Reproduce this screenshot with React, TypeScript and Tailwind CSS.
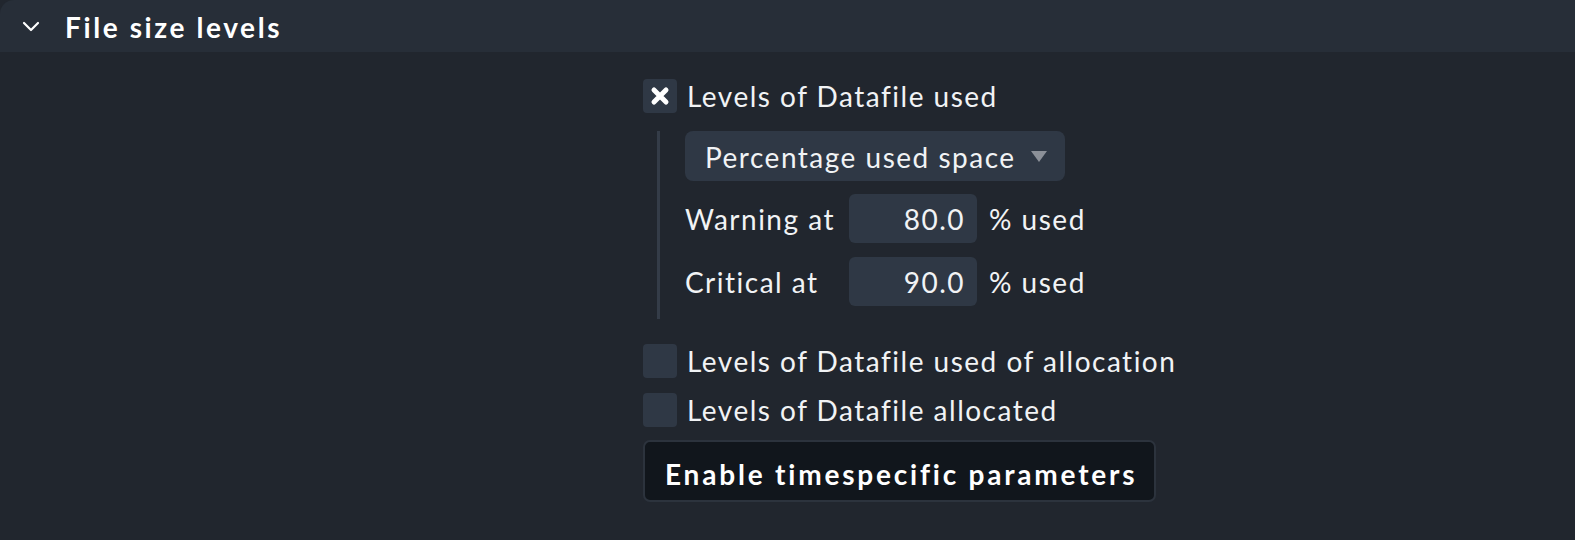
import React from "react";

const font = { fontFamily: "Lato, 'Noto Sans', sans-serif" };

const Checkbox = ({ checked }: { checked?: boolean }) => (
  <span className="flex h-[34px] w-[34px] shrink-0 items-center justify-center rounded-[4px] bg-[#2f3845]">
    {checked && (
      <svg width="22" height="22" viewBox="0 0 22 22">
        <path d="M5 5 L17 17 M17 5 L5 17" stroke="#ffffff" strokeWidth="5" strokeLinecap="round" />
      </svg>
    )}
  </span>
);

const LevelRow = ({ label, value }: { label: string; value: string }) => (
  <div className="flex h-[49px] items-center">
    <span className="w-[164px]">{label}</span>
    <span className="flex h-[49px] w-[128px] items-center justify-end rounded-[6px] bg-[#2f3845] pr-[12px]">
      {value}
    </span>
    <span className="ml-[12px]">% used</span>
  </div>
);

export default function App() {
  return (
    <div
      className="h-[540px] w-[1575px] bg-[#21262e] text-[28px] leading-[34px] tracking-[1.5px] text-[#f1f3f5]"
      style={font}
    >
      <div className="flex h-[52px] items-center rounded-tl-[14px] bg-[#272e38]">
        <svg className="ml-[21px]" width="20" height="20" viewBox="0 0 20 20">
          <path d="M3 7 L10 14 L17 7" fill="none" stroke="#ffffff" strokeWidth="2.2" strokeLinecap="round" strokeLinejoin="round" />
        </svg>
        <span className="ml-[24px] pt-[2px] text-[28px] font-bold tracking-[2.6px] text-white">File size levels</span>
      </div>

      <div className="ml-[643px] flex flex-col pt-[27px]">
        <label className="flex h-[34px] items-center gap-[10px]">
          <Checkbox checked />
          <span>Levels of Datafile used</span>
        </label>

        <div className="ml-[14px] mt-[18px] flex flex-col border-l-[3px] border-[#343c48] pb-[13px] pl-[25px]">
          <div className="flex h-[50px] w-[380px] items-center justify-between rounded-[8px] bg-[#2f3845] pl-[20px] pr-[18px]">
            <span className="pt-[2px]">Percentage used space</span>
            <svg width="16" height="12" viewBox="0 0 16 12">
              <path d="M0 1 L16 1 L8 12 Z" fill="#8b9098" />
            </svg>
          </div>
          <div className="mt-[13px]">
            <LevelRow label="Warning at" value="80.0" />
          </div>
          <div className="mt-[14px]">
            <LevelRow label="Critical at" value="90.0" />
          </div>
        </div>

        <label className="mt-[25px] flex h-[34px] items-center gap-[10px]">
          <Checkbox />
          <span>Levels of Datafile used of allocation</span>
        </label>
        <label className="mt-[15px] flex h-[34px] items-center gap-[10px]">
          <Checkbox />
          <span>Levels of Datafile allocated</span>
        </label>

        <button className="mt-[13px] h-[62px] w-[513px] rounded-[7px] border-2 border-[#2c333d] bg-[#11161c] pl-[20px] pt-[5px] text-left text-[28px] font-bold tracking-[2.8px] text-white">
          Enable timespecific parameters
        </button>
      </div>
    </div>
  );
}
